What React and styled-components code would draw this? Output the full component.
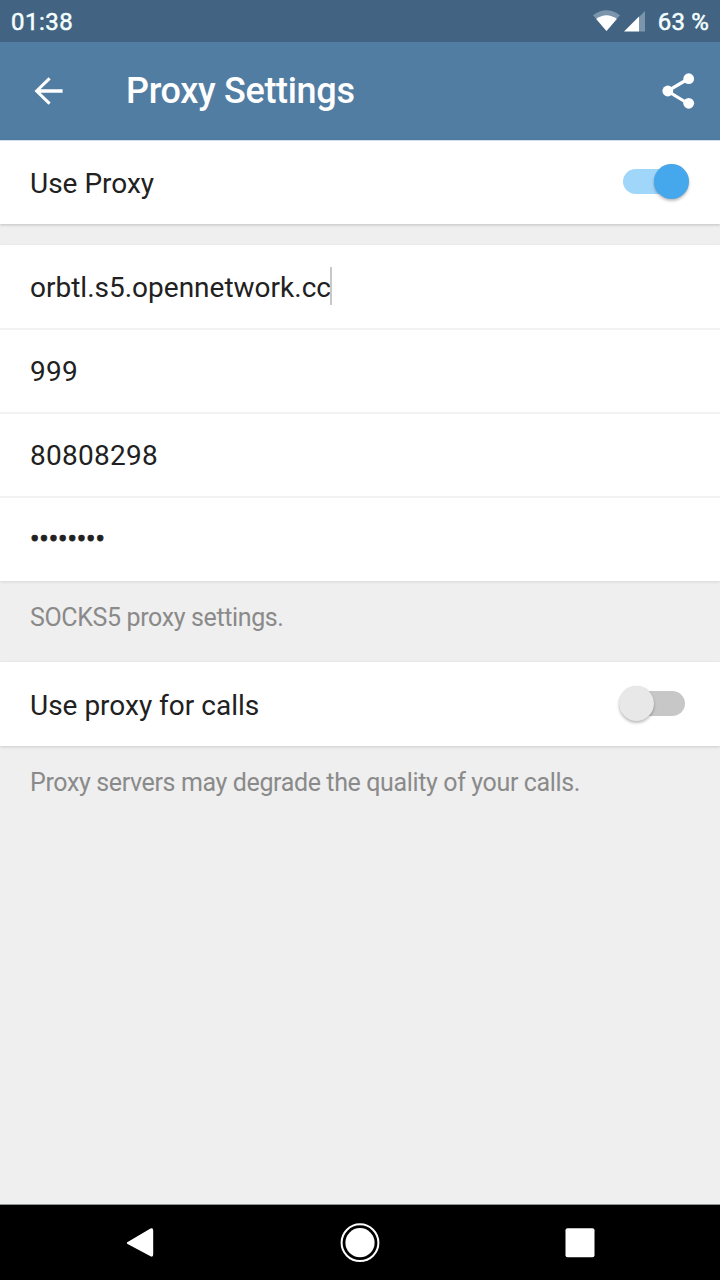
import React from 'react';
import styled, { createGlobalStyle } from 'styled-components';

const GlobalStyle = createGlobalStyle`
  * { box-sizing: border-box; }
  body { margin: 0; background: #efefef; }
`;

const Screen = styled.div`
  width: 720px;
  height: 1280px;
  display: flex;
  flex-direction: column;
  overflow: hidden;
  background: #efefef;
  color: #212121;
  font-family: Roboto, sans-serif;
  font-size: 28px;
`;

const StatusBar = styled.div`
  height: 42px;
  flex: none;
  display: flex;
  align-items: center;
  padding: 2px 11px 0 11px;
  background: #426482;
  color: #f4ffff;
  font-size: 24px;
  line-height: 28px;
`;

const Clock = styled.span`
  flex: 1;
  letter-spacing: 0.5px;
  -webkit-text-stroke: 0.5px currentColor;
`;

const Battery = styled.span`
  letter-spacing: 0.2px;
  -webkit-text-stroke: 0.5px currentColor;
`;

const StatusIcons = styled.svg`
  width: 54px;
  height: 22px;
  margin: -2px 11px 0 0;
`;

const Header = styled.header`
  height: 98px;
  flex: none;
  display: flex;
  align-items: center;
  padding: 0 22px 0 30px;
  background: #527da3;
  color: #fff;
`;

const HeaderIcon = styled.svg`
  width: ${(p) => p.$size}px;
  height: ${(p) => p.$size}px;
  fill: #fff;
`;

const Title = styled.h1`
  flex: 1;
  margin: 0 0 0 60px;
  font-size: 36px;
  line-height: 42px;
  font-weight: 500;
  letter-spacing: -0.33px;
`;

const Section = styled.section`
  flex: none;
  background: #fff;
  box-shadow: 0 1px 3px rgba(0, 0, 0, ${(p) => p.$shade || 0.1});
`;

const SwitchSection = styled(Section)`
  border-top: ${(p) => (p.$edge ? '1px solid #cfe0ef' : '0')};
`;

const Row = styled.div`
  height: ${(p) => (p.$edge ? 83 : 84)}px;
  display: flex;
  align-items: center;
  justify-content: space-between;
  padding: ${(p) => (p.$edge ? '1px' : '2px')} 30px 0;
  line-height: 34px;
`;

const Label = styled.span`
  padding-top: 2px;
`;

const Field = styled.div`
  height: 84px;
  display: flex;
  align-items: center;
  padding: 2px 30px 0;
  border-bottom: 2px solid #f3f3f3;
  line-height: 34px;
  letter-spacing: ${(p) => p.$spacing || 0}px;

  &:first-child {
    height: 85px;
    padding-top: 3px;
  }

  &:last-child {
    height: 83px;
    padding: 0 30px 2px;
    border-bottom: 0;
  }
`;

const Mask = styled.span`
  -webkit-text-stroke: 0.8px currentColor;
`;

const Caret = styled.span`
  width: 2px;
  height: 38px;
  margin: 0 0 4px -1px;
  background: #c8c8c8;
`;

const Gap = styled.div`
  height: 21px;
  flex: none;
`;

const Note = styled.p`
  height: ${(p) => p.$height}px;
  flex: none;
  margin: 0;
  padding: 22px 30px 0;
  color: #8a8a8a;
  font-size: 25px;
  line-height: 30px;
  letter-spacing: -0.37px;
`;

const Track = styled.div`
  width: 62px;
  height: 25px;
  display: flex;
  align-items: center;
  justify-content: ${(p) => (p.$on ? 'flex-end' : 'flex-start')};
  margin: 0 5px 3px 0;
  border-radius: 13px;
  background: ${(p) => (p.$on ? '#a0d6fa' : '#c7c7c7')};
`;

const Thumb = styled.div`
  width: 35px;
  height: 35px;
  flex: none;
  margin: 0 ${(p) => (p.$on ? '-4px' : '0')} 0 ${(p) => (p.$on ? '0' : '-4px')};
  border-radius: 50%;
  background: ${(p) => (p.$on ? '#45a7ec' : '#e8e8e8')};
  box-shadow: 0 2px 3px rgba(0, 0, 0, 0.25), 0 0 1px rgba(0, 0, 0, 0.12);
`;

const Filler = styled.div`
  flex: 1;
`;

const NavBar = styled.nav`
  height: 76px;
  flex: none;
  display: flex;
  align-items: center;
  justify-content: space-between;
  padding: 0 120px;
  border-top: 1px solid #8e9492;
  background: #000;
`;

const NavIcon = styled.svg`
  width: 40px;
  height: 40px;
  fill: #fff;
`;

function Switch({ on }) {
  return (
    <Track $on={on}>
      <Thumb $on={on} />
    </Track>
  );
}

export default function App() {
  return (
    <Screen>
      <GlobalStyle />
      <StatusBar>
        <Clock>01:38</Clock>
        <StatusIcons viewBox="0 0 54 22">
          <path d="M0 5.3 Q13.5 -4.7 27 5.3 L13.5 21 Z" fill="#7a95ac" />
          <path d="M3.2 9 Q13.5 1.5 23.8 9 L13.5 21 Z" fill="#fff" />
          <path d="M52 1 V21.5 H45.5 V7.5 Z" fill="#7a95ac" />
          <path d="M46 6.5 V21.5 H31 Z" fill="#fff" />
        </StatusIcons>
        <Battery>63 %</Battery>
      </StatusBar>
      <Header>
        <HeaderIcon $size={36} viewBox="0 0 36 36">
          <path d="M18.5 4.2 L20.7 6.4 L10.5 16.2 H32.6 V19.8 H10.5 L20.7 29.6 L18.5 31.8 L4.5 18 Z" />
        </HeaderIcon>
        <Title>Proxy Settings</Title>
        <HeaderIcon $size={40} viewBox="0 0 40 40">
          <path d="M30 8 L9.5 20 L30 32.5" fill="none" stroke="#fff" strokeWidth="3.2" />
          <circle cx="30.7" cy="7.7" r="5.4" />
          <circle cx="9.8" cy="20" r="5.4" />
          <circle cx="30.7" cy="32.3" r="5.4" />
        </HeaderIcon>
      </Header>
      <SwitchSection $edge $shade={0.2}>
        <Row $edge>
          <Label>Use Proxy</Label>
          <Switch on />
        </Row>
      </SwitchSection>
      <Gap />
      <Section>
        <Field>
          orbtl.s5.opennetwork.cc
          <Caret />
        </Field>
        <Field $spacing={0.25}>999</Field>
        <Field $spacing={0.25}>80808298</Field>
        <Field $spacing={-0.1}>
          <Mask>••••••••</Mask>
        </Field>
      </Section>
      <Note $height={81}>SOCKS5 proxy settings.</Note>
      <SwitchSection $shade={0.15}>
        <Row>
          <Label>Use proxy for calls</Label>
          <Switch />
        </Row>
      </SwitchSection>
      <Note $height={80}>Proxy servers may degrade the quality of your calls.</Note>
      <Filler />
      <NavBar>
        <NavIcon viewBox="0 0 40 40">
          <path d="M8.5 18.5 L30.5 5.5 Q33.2 4.5 33.2 7.5 V31.5 Q33.2 34.5 30.5 33.3 L8.5 21.5 Q5 20 8.5 18.5 Z" />
        </NavIcon>
        <NavIcon viewBox="0 0 40 40">
          <circle cx="20" cy="19.7" r="18.4" fill="none" stroke="#fff" strokeWidth="2" />
          <circle cx="20" cy="19.7" r="14.6" />
        </NavIcon>
        <NavIcon viewBox="0 0 40 40">
          <rect x="5.5" y="5.2" width="29" height="29" rx="2" />
        </NavIcon>
      </NavBar>
    </Screen>
  );
}
